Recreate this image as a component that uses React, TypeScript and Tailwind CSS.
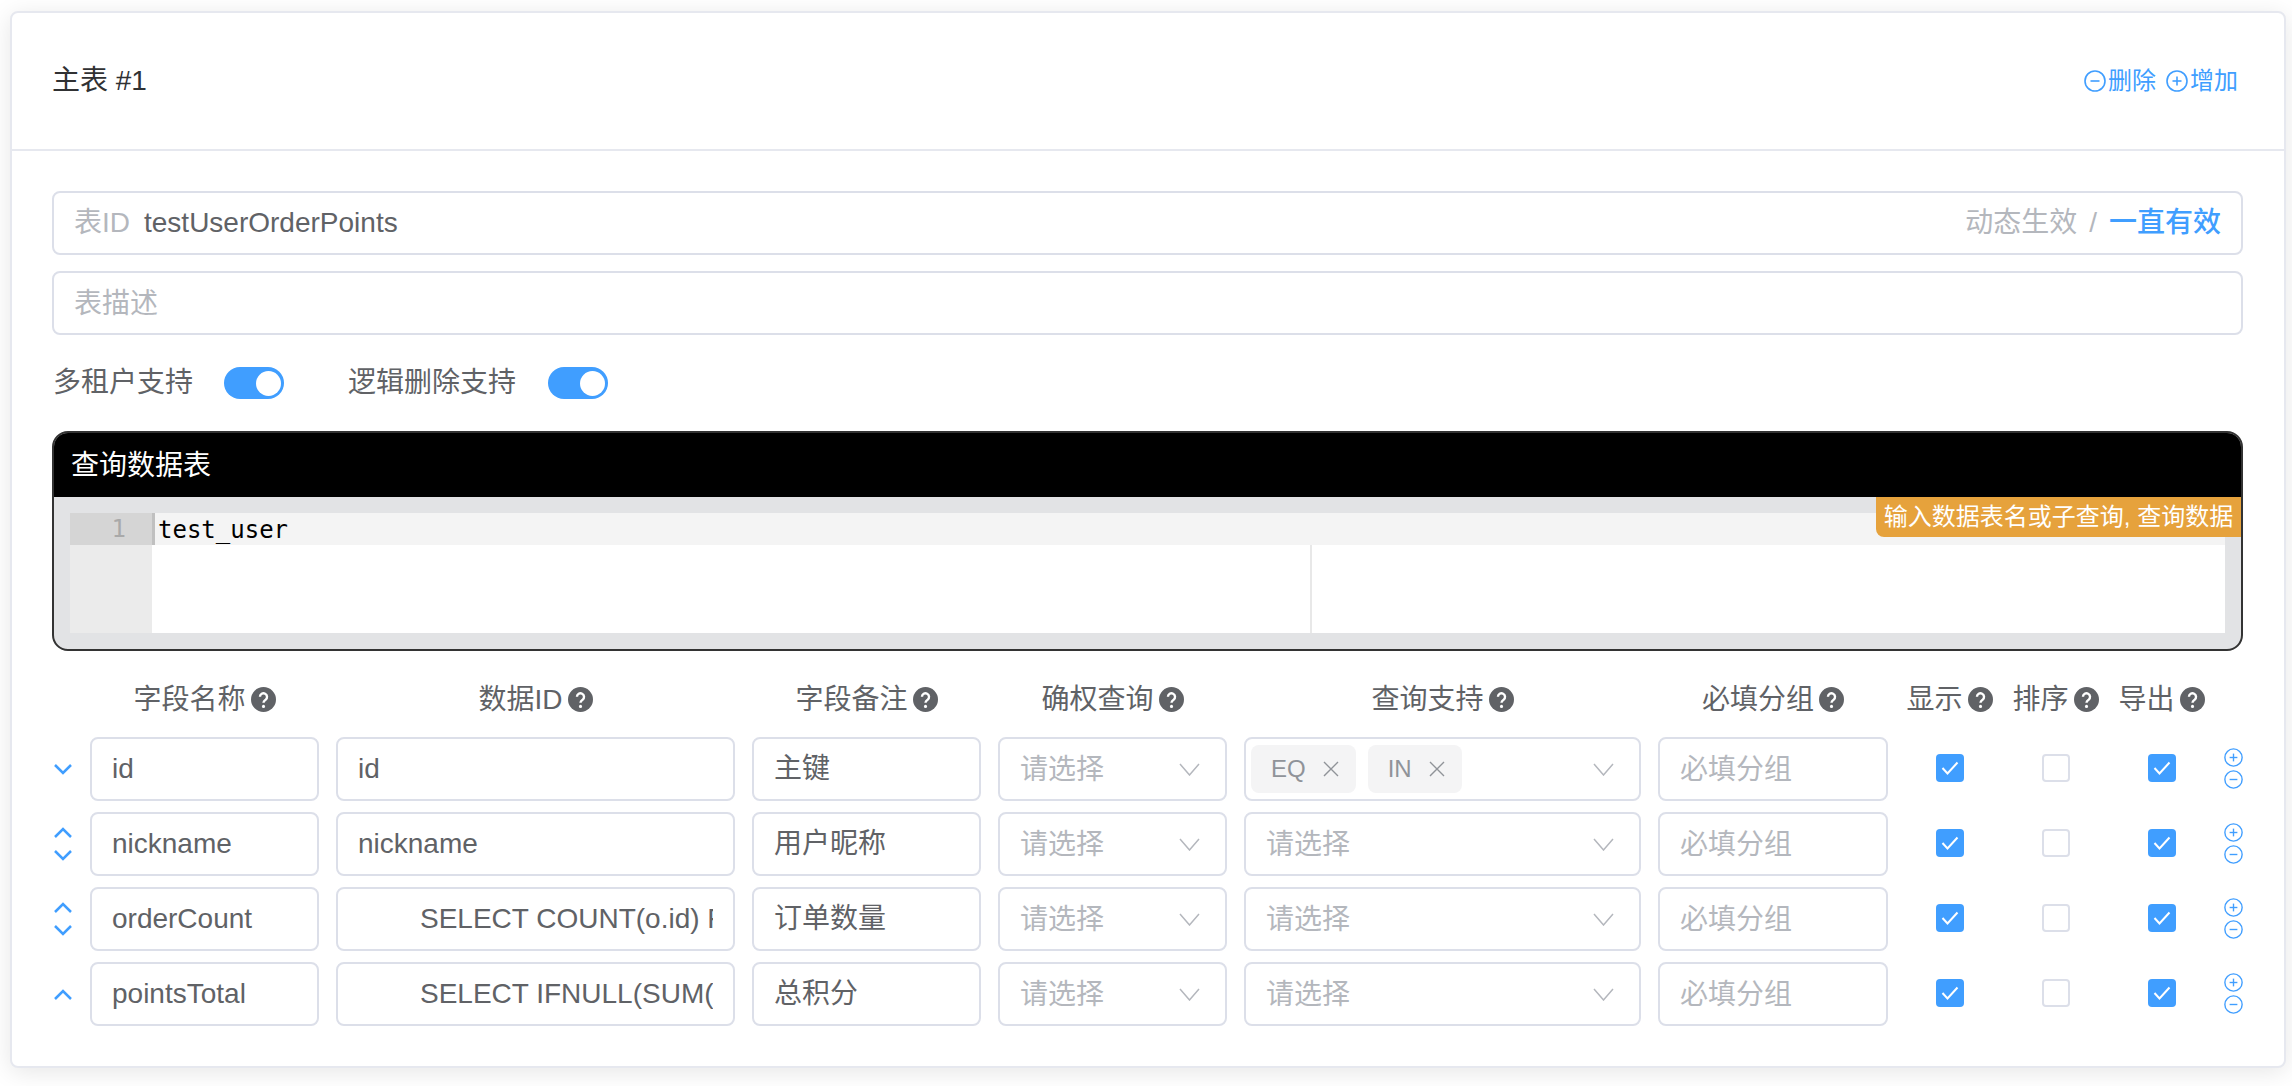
const GRID =
  'grid grid-cols-[21px_229px_399px_229px_229px_397px_230px_89px_89px_89px_20px] gap-x-[17px] gap-y-[11px]';
const BOX = 'h-16 border-2 border-[#dcdfe9] rounded-lg bg-white flex items-center';

const rows = [
  { name: 'id', dataId: 'id', note: '主键', up: false, down: true, ops: ['EQ', 'IN'] },
  { name: 'nickname', dataId: 'nickname', note: '用户昵称', up: true, down: true, ops: [] },
  { name: 'orderCount', dataId: 'SELECT COUNT(o.id) FROM', note: '订单数量', up: true, down: true, ops: [], sql: true },
  { name: 'pointsTotal', dataId: 'SELECT IFNULL(SUM(p', note: '总积分', up: true, down: false, ops: [], sql: true },
];

const headers = ['字段名称', '数据ID', '字段备注', '确权查询', '查询支持', '必填分组', '显示', '排序', '导出'];

function Help() {
  return (
    <svg width="25" height="25" viewBox="0 0 24 24" className="shrink-0 ml-[5px]">
      <circle cx="12" cy="12" r="12" fill="#606266" />
      <path d="M8.6 9.4a3.4 3.4 0 1 1 5.4 2.8c-1.3.9-2 1.4-2 3" fill="none" stroke="#fff" strokeWidth="2.3" />
      <circle cx="12" cy="18.6" r="1.5" fill="#fff" />
    </svg>
  );
}

function CircleIcon({ plus, size }: { plus?: boolean; size: number }) {
  return (
    <svg width={size} height={size} viewBox="0 0 22 22" fill="none" stroke="#409eff" strokeWidth="1.6" className="shrink-0">
      <circle cx="11" cy="11" r="10" />
      <path d="M6.5 11h9" />
      {plus && <path d="M11 6.5v9" />}
    </svg>
  );
}

function Arrow({ up }: { up?: boolean }) {
  return (
    <svg width="18" height="11" viewBox="0 0 18 11" fill="none" stroke="#409eff" strokeWidth="2.5">
      <path d={up ? 'M1 10l8-8 8 8' : 'M1 1l8 8 8-8'} />
    </svg>
  );
}

function Chevron() {
  return (
    <svg width="21" height="13" viewBox="0 0 21 13" fill="none" stroke="#b4b7bd" strokeWidth="1.5" className="shrink-0">
      <path d="M1 1l9.5 11L20 1" />
    </svg>
  );
}

function Toggle() {
  return (
    <div className="w-[60px] h-8 rounded-full bg-[#409eff] flex items-center justify-end pr-[3px]">
      <span className="w-[25px] h-[25px] rounded-full bg-white" />
    </div>
  );
}

function Check({ on }: { on: boolean }) {
  if (!on) return <div className="w-7 h-7 rounded border-2 border-[#dcdfe9] bg-white -translate-y-px" />;
  return (
    <div className="w-7 h-7 rounded bg-[#409eff] flex items-center justify-center -translate-y-px">
      <svg width="18" height="14" viewBox="0 0 18 14" fill="none" stroke="#fff" strokeWidth="2">
        <path d="M1.5 7l5 5.5L16.5 1.5" />
      </svg>
    </div>
  );
}

function Select({ ops = [] }: { ops?: string[] }) {
  return (
    <div className={`${BOX} justify-between pr-[25px] ${ops.length ? 'pl-[5px]' : 'pl-[20px]'}`}>
      {ops.length ? (
        <div className="flex gap-3">
          {ops.map((o) => (
            <span key={o} className="h-12 rounded-lg bg-[#f4f4f5] pl-5 pr-[17px] flex items-center gap-[17px] text-2xl leading-none text-[#909399]">
              {o}
              <svg width="16" height="16" viewBox="0 0 16 16" fill="none" stroke="#909399" strokeWidth="1.4">
                <path d="M1 1l14 14M15 1L1 15" />
              </svg>
            </span>
          ))}
        </div>
      ) : (
        <span className="pt-[2px] text-[#b4b7bd]">请选择</span>
      )}
      <Chevron />
    </div>
  );
}

function Input({ children, placeholder, indent }: { children?: string; placeholder?: boolean; indent?: boolean }) {
  return (
    <div className={`${BOX} px-5`}>
      <div className={`overflow-hidden whitespace-nowrap w-full leading-[40px] ${indent ? 'pl-[62px]' : ''} ${placeholder ? 'pt-[2px] text-[#b4b7bd]' : 'text-[#606266]'}`}>
        {children}
      </div>
    </div>
  );
}

export default function App() {
  return (
    <div className="min-h-[1086px] bg-white pt-[11px] pl-[10px] pr-[6px] text-[28px] leading-none text-[#606266] font-['Liberation_Sans','Noto_Sans_CJK_SC',sans-serif]">
      <div className="border-2 border-[#e6e8ef] rounded-lg bg-white shadow-[0_4px_24px_rgba(0,0,0,0.1)]">
        <div className="h-[138px] border-b-2 border-[#e6e8ef] flex items-center justify-between pl-10 pr-[46px]">
          <span className="text-[#303133]">主表 #1</span>
          <div className="flex items-center gap-[10px] text-2xl text-[#409eff]">
            <span className="flex items-center gap-[2px]">
              <CircleIcon size={22} />
              删除
            </span>
            <span className="flex items-center gap-[2px]">
              <CircleIcon plus size={22} />
              增加
            </span>
          </div>
        </div>

        <div className="pt-10 pb-10 pl-10 pr-[41px]">
          <div className={`${BOX} px-5`}>
            <span className="text-[#b4b7bd] mr-[14px]">表ID</span>
            <span>testUserOrderPoints</span>
            <span className="ml-auto text-[#b4b7bd]">动态生效</span>
            <span className="mx-3 text-[#b4b7bd]">/</span>
            <span className="font-medium text-[#409eff]">一直有效</span>
          </div>
          <div className="mt-4">
            <Input placeholder>表描述</Input>
          </div>

          <div className="flex items-center h-8 mt-8">
            <span className="w-[172px] pl-px">多租户支持</span>
            <Toggle />
            <span className="ml-[64px] w-[200px]">逻辑删除支持</span>
            <Toggle />
          </div>

          <div className="relative mt-8 h-[220px] rounded-2xl border-2 border-[#333] bg-[#e2e3e5] overflow-hidden flex flex-col">
            <div className="h-[64px] bg-black text-white flex items-center pl-[17px] pt-[2px]">查询数据表</div>
            <div className="mx-4 mt-4 h-[120px] flex bg-white font-['DejaVu_Sans_Mono',monospace] text-2xl text-black">
              <div className="w-[82px] bg-[#ebebeb]">
                <div className="h-8 bg-[#d5d5d5] text-[#a9a9a9] flex items-center justify-end pr-[26px]">1</div>
              </div>
              <div className="flex-1 flex flex-col">
                <div className="h-8 bg-[#f4f4f4] flex items-center pl-[6px] pt-[2px] relative">
                  <span className="absolute left-0 top-0 h-8 w-[3px] bg-[#c0c0c0]" />
                  test_user
                </div>
                <div className="flex-1 flex">
                  <div className="w-[1160px] border-r-2 border-[#e8e8e8]" />
                </div>
              </div>
            </div>
            <div className="absolute right-0 top-[64px] h-10 w-[365px] rounded-bl-lg bg-[#e6a23c] text-white text-2xl flex items-center justify-center">
              输入数据表名或子查询, 查询数据
            </div>
          </div>

          <div className={`${GRID} mt-[20px]`}>
            <div />
            {headers.map((h) => (
              <div key={h} className="h-[55px] pt-[2px] flex items-center justify-center">
                {h}
                <Help />
              </div>
            ))}
            <div />

            {rows.map((r) => (
              <div key={r.name} className="contents">
                <div className={`h-16 flex flex-col items-start pl-[2px] justify-center ${r.up && r.down ? 'gap-[12px]' : ''}`}>
                  {r.up && <Arrow up />}
                  {r.down && <Arrow />}
                </div>
                <Input>{r.name}</Input>
                <Input indent={r.sql}>{r.dataId}</Input>
                <Input>{r.note}</Input>
                <Select />
                <Select ops={r.ops} />
                <Input placeholder>必填分组</Input>
                <div className="h-16 flex items-center justify-center"><Check on /></div>
                <div className="h-16 flex items-center justify-center"><Check on={false} /></div>
                <div className="h-16 flex items-center justify-center"><Check on /></div>
                <div className="h-16 flex flex-col items-center justify-center gap-[3px] -translate-y-px">
                  <CircleIcon plus size={19} />
                  <CircleIcon size={19} />
                </div>
              </div>
            ))}
          </div>
        </div>
      </div>
    </div>
  );
}
